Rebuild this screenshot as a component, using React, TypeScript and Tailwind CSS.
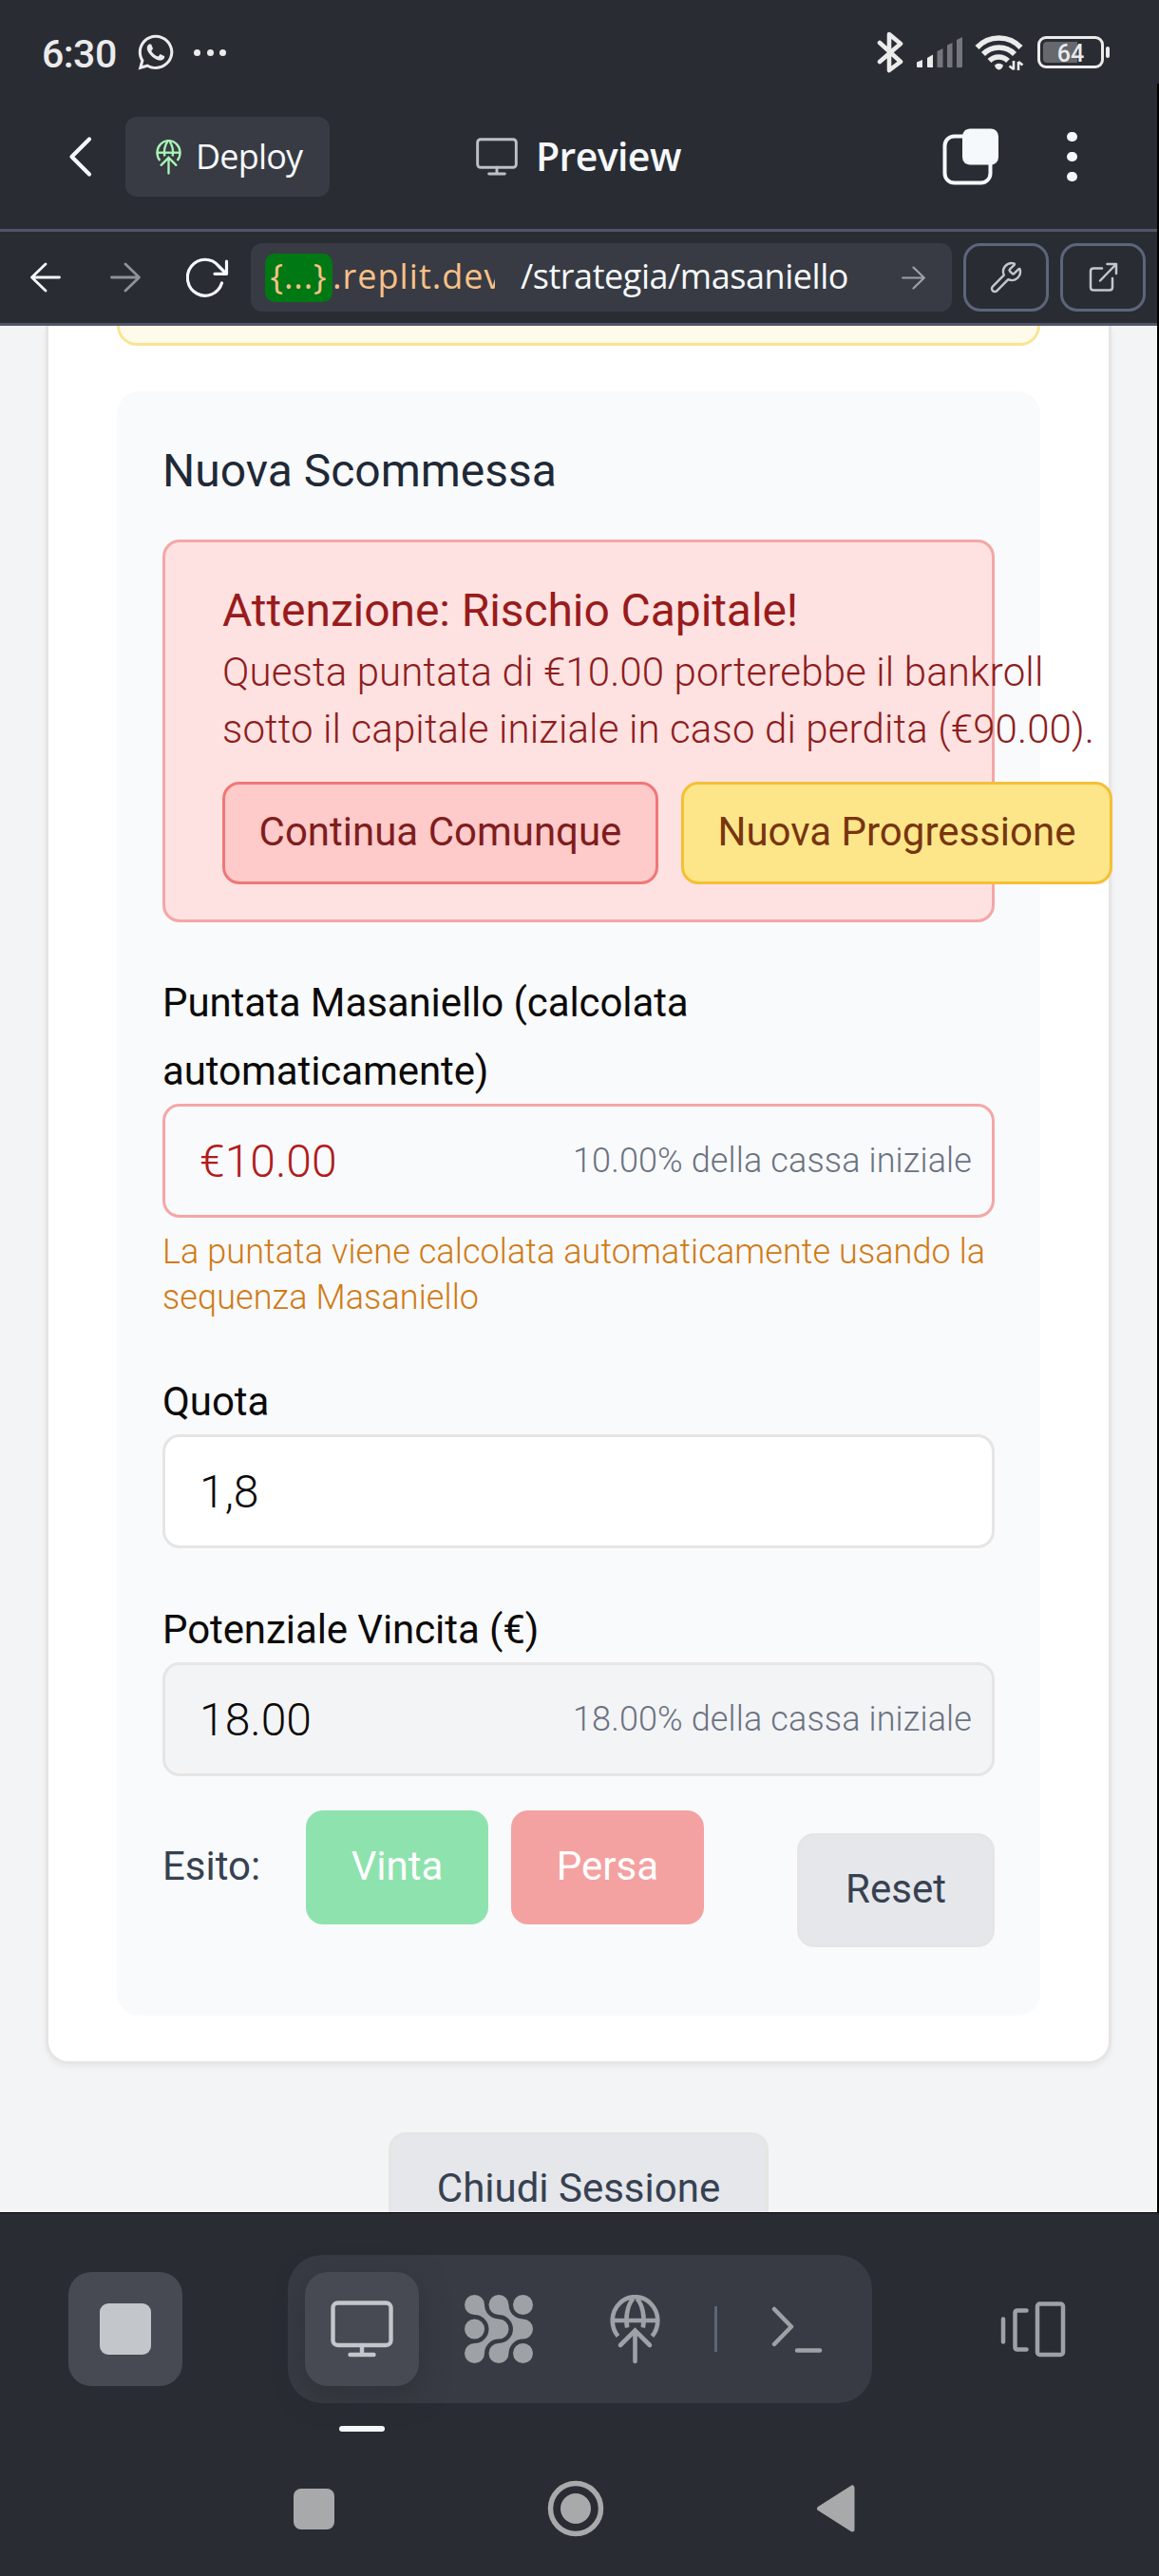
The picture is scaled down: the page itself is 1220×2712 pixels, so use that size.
import type { ReactNode } from "react";
import { Wrench } from "lucide-react";
import { FaWhatsapp } from "react-icons/fa";

const UI = "font-['Open_Sans',sans-serif]";

function MonitorIcon({ className }: { className: string }) {
  return (
    <svg viewBox="0 0 66 60" fill="none" stroke="currentColor" strokeWidth="4.4" strokeLinecap="round" className={className}>
      <rect x="2.5" y="2.5" width="61" height="44.5" rx="5" />
      <path d="M33 47v9M20.5 57h25" />
    </svg>
  );
}

function DeployIcon({ className }: { className: string }) {
  return (
    <svg viewBox="0 0 53 73" fill="none" stroke="currentColor" strokeWidth="4.6" className={className}>
      <path d="M8.5 43.5A23.8 25 0 1 1 44.5 43.5" />
      <path d="M2.5 27H50.500" />
      <path d="M18.200 34.500C16 24 18.500 10.500 24.500 4M34.800 34.500C37 24 34.500 10.500 28.500 4" />
      <path d="M11 53L26.500 37.500L42 53M26.500 38V70" strokeLinecap="round" />
    </svg>
  );
}

function ArrowIcon({ className }: { className: string }) {
  return (
    <svg viewBox="0 0 32 32" fill="none" stroke="currentColor" strokeWidth="2.800" strokeLinecap="round" strokeLinejoin="round" className={className}>
      <path d="M1.500 16H30M16 2L30.500 16L16 30" />
    </svg>
  );
}

function StatusBar() {
  return (
    <div className="flex h-[88px] items-start justify-between bg-[#2a2c34] pr-[52px] pl-[44px] text-[#ebebeb]">
      <div className="flex h-[110px] items-center">
        <span className="mt-[5px] w-[96px] font-['Roboto',sans-serif] text-[41px] font-medium tracking-[-0.5px]">6:30</span>
        <FaWhatsapp className="ml-[3px] size-[42px]" />
        <div className="ml-[19px] flex gap-[6.500px]">
          <i className="size-[7px] rounded-full bg-current" />
          <i className="size-[7px] rounded-full bg-current" />
          <i className="size-[7px] rounded-full bg-current" />
        </div>
      </div>
      <div className="flex h-[110px] items-center">
        <svg viewBox="0 0 28 44" className="mr-[13px] h-[44px] w-[28px]" fill="none" stroke="currentColor" strokeWidth="4.600" strokeLinejoin="round" strokeLinecap="round">
          <path d="M3 12L25 32L13 41V3L25 13L3 32" />
        </svg>
        <svg viewBox="0 0 50 34" className="mr-[12px] h-[34px] w-[50px]" fill="currentColor">
          <path d="M1 27.500L7 25V33H2Q1 33 1 32Z" />
          <path d="M12 23L18 19.500V33H13Q12 33 12 32Z" />
          <g fill="#74767c">
            <path d="M22.500 16L28.500 13V33H23.500Q22.500 33 22.500 32Z" />
            <path d="M33 9.500L38.500 7V33H34Q33 33 33 32Z" />
            <path d="M43 4L49 1V32Q49 33 48 33H43Z" />
          </g>
        </svg>
        <svg viewBox="0 0 52 40" className="mr-[14px] h-[40px] w-[52px]" fill="none" stroke="currentColor" strokeWidth="5.600">
          <path d="M2.500 15A31.500 31.500 0 0 1 48.500 15M9 22A23 23 0 0 1 42 22M15.500 29A14 14 0 0 1 35 29" />
          <path d="M21 33.500Q25.500 30 30 33.500Q29 38 25.500 38.500Q22 38 21 33.500Z" fill="currentColor" stroke="none" />
          <path d="M41 29V38.500M46 30V39M36.500 34.500L41 38M50.500 33.500L46 30" strokeWidth="2.600" />
        </svg>
        <div className="relative h-[34px] w-[70px] rounded-[9px] border-[3px] border-current p-[3px]">
          <div className="h-[22px] w-[36px] rounded-l-[4px] bg-[#66686d]" />
          <span className="absolute inset-0 text-center font-['Roboto',sans-serif] text-[25px] leading-[32px] font-medium">64</span>
        </div>
        <i className="ml-[2px] h-[12px] w-[4px] rounded-[2px] bg-current" />
      </div>
    </div>
  );
}

function Header() {
  return (
    <header className={`flex h-[153px] items-start bg-[#2a2c34] text-[#f5f9fc] ${UI}`}>
      <div className="flex h-[154px] w-full items-center">
        <svg viewBox="0 0 26 44" className="ml-[72px] h-[44px] w-[26px]" fill="none" stroke="currentColor" strokeWidth="4.200" strokeLinecap="round" strokeLinejoin="round">
          <path d="M22 3.500L3.500 22L22 40.500" />
        </svg>
        <button className="ml-[34px] flex h-[84px] w-[215px] items-center rounded-[12px] bg-[#383b43] pl-[32px]">
          <DeployIcon className="h-[37px] w-[27px] text-[#a9f5b6]" />
          <span className="ml-[15px] text-[36px] tracking-[-0.8px]">Deploy</span>
        </button>
        <MonitorIcon className="ml-[154px] h-[40px] w-[44px] text-[#bdc1c6]" />
        <span className="ml-[19px] w-[154px] text-[41px] font-[560] tracking-[-0.6px]">Preview</span>
        <svg viewBox="0 0 60 60" className="ml-[274px] size-[60px]" fill="none">
          <rect x="2.500" y="8.500" width="48" height="49" rx="10" stroke="currentColor" strokeWidth="4" />
          <rect x="21" y="0.500" width="38" height="38" rx="8" fill="currentColor" />
        </svg>
        <div className="ml-[71px] flex flex-col gap-[10.500px]">
          <i className="size-[10.500px] rounded-full bg-current" />
          <i className="size-[10.500px] rounded-full bg-current" />
          <i className="size-[10.500px] rounded-full bg-current" />
        </div>
      </div>
    </header>
  );
}

function UrlBar() {
  return (
    <div className={`flex h-[102px] items-center border-y-[3px] border-[#4f5667] bg-[#2a2c34] text-[#f5f9fc] ${UI}`}>
      <ArrowIcon className="ml-[32px] size-[32px] rotate-180" />
      <ArrowIcon className="ml-[52px] size-[32px] text-[#8f9298]" />
      <svg viewBox="0 0 45 42" className="ml-[48px] h-[42px] w-[45px]" fill="none" stroke="currentColor" strokeWidth="3.200" strokeLinecap="round" strokeLinejoin="round">
        <path d="M37.500 27A18.500 19 0 1 1 34 9L42 17M42.500 4V17.300H30" />
      </svg>
      <div className="ml-[23px] flex h-[72px] w-[738px] items-center rounded-[12px] bg-[#383b43] pl-[15px] text-[36px]">
        <div className="flex w-[242px] items-center overflow-hidden text-[#f7c188]">
          <span className="flex h-[51px] w-[71px] shrink-0 items-center justify-center rounded-[10px] bg-[#007813] pb-[2px] tracking-[0.900px]">{"{...}"}</span>
          <span className="pb-[2px] tracking-[1.050px]">.replit.dev</span>
        </div>
        <span className="mt-[-2px] ml-[27px] w-[346px] tracking-[-0.450px]">/strategia/masaniello</span>
        <ArrowIcon className="ml-[55px] size-[25px] text-[#9ea2a7]" />
      </div>
      <button className="ml-[12px] flex h-[72px] w-[90px] items-center justify-center rounded-[18px] border-[3px] border-[#5c667a] text-[#c3c7cb]">
        <Wrench className="size-[36px]" strokeWidth={1.6} />
      </button>
      <button className="ml-[12px] flex h-[72px] w-[90px] items-center justify-center rounded-[18px] border-[3px] border-[#5c667a] text-[#c3c7cb]">
        <svg viewBox="0 0 32 32" className="size-[32px]" fill="none" stroke="currentColor" strokeWidth="2.500" strokeLinecap="round" strokeLinejoin="round">
          <path d="M15 6.500H6Q3 6.500 3 9.500V26.500Q3 29.500 6 29.500H23Q26 29.500 26 26.500V17M20.500 2H30V12M30 2L13 19.500" />
        </svg>
      </button>
    </div>
  );
}

function Label({ lines, children }: { lines?: boolean; children: ReactNode }) {
  return <label className={`block pt-[2px] text-[42px] leading-[72px] tracking-[-0.08px] text-[#0c0a09] ${lines ? "h-[144px]" : "h-[72px]"}`}>{children}</label>;
}

function Field({ value, note, className }: { value: string; note?: string; className: string }) {
  return (
    <div className={`flex h-[120px] items-center justify-between rounded-[18px] border-[3px] pr-[21px] pl-[36px] font-light ${className}`}>
      <span className="pt-px text-[48px]">{value}</span>
      {note && <span className="text-[36px] tracking-[0.120px] text-[#6b7280]">{note}</span>}
    </div>
  );
}

function RiskAlert() {
  return (
    <div className="mt-[36px] h-[403px] rounded-[18px] border-[3px] border-[#f5a6a6] bg-[#fee2e2] pt-[36px] pl-[60px] text-[#991b1b]">
      <h4 className="text-[48px] leading-[71px] tracking-[-0.08px]">Attenzione: Rischio Capitale!</h4>
      <p className="w-[940px] text-[42px] leading-[60px] font-light tracking-[0.130px] text-[#8f1d1d]">
        Questa puntata di €10.00 porterebbe il bankroll
        <br />
        sotto il capitale iniziale in caso di perdita (€90.00).
      </p>
      <div className="mt-[25px] flex w-[940px] gap-[24px] text-[42px]">
        <button className="h-[108px] w-[459px] rounded-[18px] border-[3px] border-[#f07777] bg-[#fecaca] pb-[3px] text-[#7f1d1d]">Continua Comunque</button>
        <button className="h-[108px] w-[454px] rounded-[18px] border-[3px] border-[#f5bf35] bg-[#fde68a] pb-[3px] text-[#78350f]">Nuova Progressione</button>
      </div>
    </div>
  );
}

function BetPanel() {
  return (
    <section className="mt-[48px] h-[1710px] rounded-[24px] bg-[#f9fafc] px-[48px] pt-[48px]">
      <h3 className="h-[72px] text-[48px] leading-[72px] text-[#1f2937]">Nuova Scommessa</h3>
      <RiskAlert />
      <div className="mt-[47px]">
        <Label lines>
          Puntata Masaniello (calcolata
          <br />
          automaticamente)
        </Label>
        <Field value="€10.00" note="10.00% della cassa iniziale" className="border-[#f5a6a6] text-[#b01c1c]" />
        <p className="mt-[12px] text-[36px] leading-[48px] font-light tracking-[0.080px] text-[#d17a14]">
          La puntata viene calcolata automaticamente usando la
          <br />
          sequenza Masaniello
        </p>
      </div>
      <div className="mt-[48px]">
        <Label>Quota</Label>
        <Field value="1,8" className="border-[#e7e5e4] bg-white text-[#0c0a09]" />
      </div>
      <div className="mt-[48px]">
        <Label>Potenziale Vincita (€)</Label>
        <Field value="18.00" note="18.00% della cassa iniziale" className="border-[#e7e5e4] bg-[#f3f4f6] text-[#0c0a09]" />
      </div>
      <div className="mt-[36px] flex text-[42px]">
        <span className="w-[151px] leading-[118px] text-[#374151]">Esito:</span>
        <button className="h-[120px] w-[192px] rounded-[18px] bg-[#8ee2ad] pb-[3px] text-white">Vinta</button>
        <button className="ml-[24px] h-[120px] w-[203px] rounded-[18px] bg-[#f4a1a1] pb-[3px] text-white">Persa</button>
        <button className="mt-[24px] ml-auto h-[120px] w-[208px] rounded-[18px] border-[3px] border-[#e7e5e4] bg-[#e5e7eb] pb-[3px] text-[#374151]">Reset</button>
      </div>
    </section>
  );
}

function NodesIcon({ className }: { className: string }) {
  const link =
    "M10.5 0A10.500 10.500 0 0 1 21 10.500A15 15 0 0 0 36 25.500A10.500 10.500 0 0 1 36 46.500A15 15 0 0 0 21 61.500A10.500 10.500 0 1 1 10.500 51A15 15 0 0 0 10.500 21A10.500 10.500 0 0 1 10.500 0Z";
  return (
    <svg viewBox="0 0 72 72" fill="currentColor" className={className}>
      <path d={link} />
      <path d={link} transform="translate(25.5 0)" />
      <circle cx="10.500" cy="36" r="10.500" />
      <circle cx="61.500" cy="10.500" r="10.500" />
      <circle cx="61.500" cy="61.500" r="10.500" />
    </svg>
  );
}

function Dock() {
  return (
    <div className="flex items-center pt-[44px] text-[#9ea2a7]">
      <button className="ml-[72px] flex size-[120px] items-center justify-center rounded-[24px] bg-[#474a52]">
        <i className="size-[54px] rounded-[9px] bg-[#c3c7cb]" />
      </button>
      <div className="ml-[111px] flex h-[156px] w-[615px] items-center rounded-[36px] bg-[#383b43] pl-[18px]">
        <button className="relative flex size-[120px] items-center justify-center rounded-[24px] bg-[#474a52] text-[#c3c7cb] shadow-[0_9px_30px_rgba(40,42,46,0.5)]">
          <MonitorIcon className="h-[60px] w-[66px]" />
          <i className="absolute top-[162px] left-[36px] h-[6px] w-[48px] rounded-[3px] bg-[#f5f9fc]" />
        </button>
        <NodesIcon className="ml-[48px] size-[72px]" />
        <DeployIcon className="ml-[81px] h-[73px] w-[53px]" />
        <i className="ml-[57px] h-[48px] w-[3px] bg-[#5c667a]" />
        <svg viewBox="0 0 54 50" className="ml-[57px] h-[50px] w-[54px]" fill="none" stroke="currentColor" strokeWidth="4.500" strokeLinecap="round" strokeLinejoin="round">
          <path d="M3 4L21 22.500L3 41M27 47.500H51" />
        </svg>
      </div>
      <svg viewBox="0 0 70 60" className="ml-[134px] h-[60px] w-[70px]" fill="none" stroke="currentColor" strokeWidth="4.500" strokeLinecap="round" strokeLinejoin="round">
        <path d="M4 19.500V43.500M28.500 10.500H19Q16.500 10.500 16.500 13V49Q16.500 51.500 19 51.500H28.500" />
        <rect x="40" y="3.500" width="27" height="53.500" rx="2.500" />
      </svg>
    </div>
  );
}

function SystemNav() {
  return (
    <div className="mt-[81px] flex items-center text-[#a8a9ab]">
      <i className="ml-[309px] size-[43px] rounded-[8px] bg-current" />
      <svg viewBox="0 0 60 60" className="ml-[224px] size-[60px]" fill="none">
        <circle cx="30" cy="30" r="26.500" stroke="currentColor" strokeWidth="5.500" />
        <circle cx="30" cy="30" r="16" fill="currentColor" />
      </svg>
      <svg viewBox="0 0 40 50" className="ml-[224px] h-[50px] w-[40px]" fill="currentColor" stroke="currentColor" strokeWidth="5" strokeLinejoin="round">
        <path d="M2.500 25L37 3V47Z" />
      </svg>
    </div>
  );
}

export default function App() {
  return (
    <div className="flex h-[2712px] w-[1220px] flex-col overflow-hidden bg-black">
      <StatusBar />
      <div className="w-[1218px]">
        <Header />
        <UrlBar />
        <main className="h-[1986px] overflow-hidden bg-[#f3f4f6] pl-[48px] font-['Roboto',sans-serif]">
          <div className="h-[1830px] w-[1122px] rounded-b-[24px] border-x-[3px] border-b-[3px] border-[#e7e5e4] bg-white px-[72px] shadow-[0_3px_6px_rgba(0,0,0,0.05)]">
            <div className="h-[21px] rounded-b-[24px] border-x-[3px] border-b-[3px] border-[#fae493] bg-[#fffbeb]" />
            <BetPanel />
          </div>
          <button className="mt-[72px] ml-[361px] block h-[120px] w-[400px] rounded-[18px] border-[3px] border-[#e7e5e4] bg-[#e5e7eb] pb-[3px] text-[42px] text-[#374151]">
            Chiudi Sessione
          </button>
        </main>
      </div>
      <footer className="mt-px h-[382px] bg-[#2a2c34]">
        <Dock />
        <SystemNav />
      </footer>
    </div>
  );
}
